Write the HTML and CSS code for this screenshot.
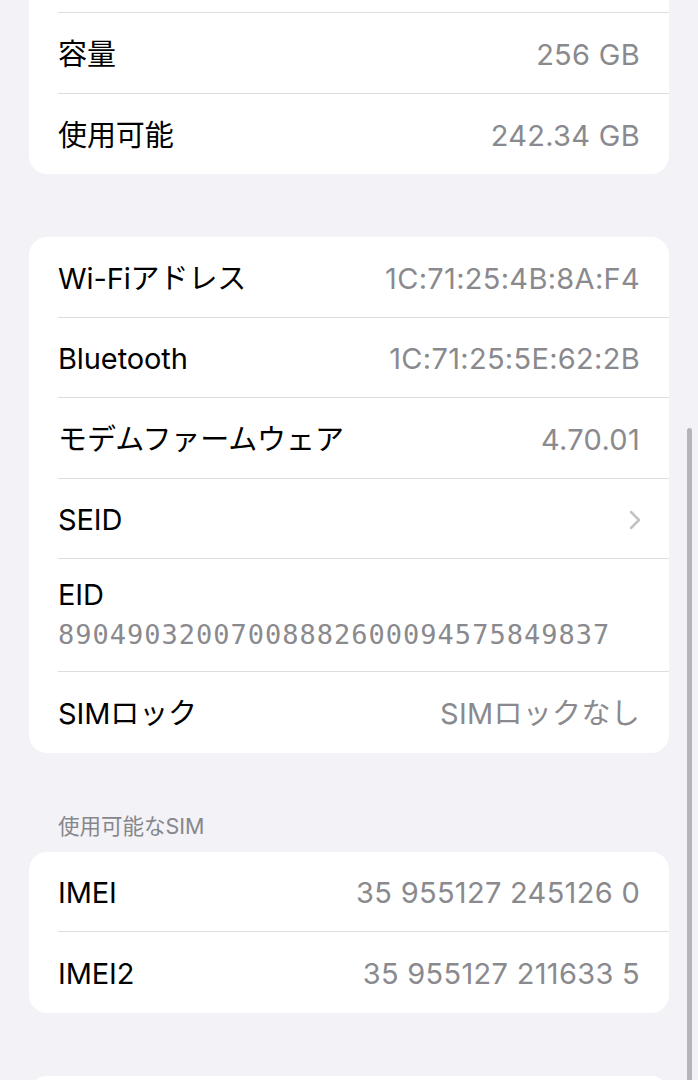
FILE: index.html
```html
<!DOCTYPE html>
<html lang="ja">
<head>
<meta charset="utf-8">
<link rel="stylesheet" href="styles.css">
</head>
<body>
<div class="page">
  <div class="card card-top">
    <div class="row top-stub"><div class="inner"></div></div>
    <div class="row"><div class="inner"><span class="label">容量</span><span class="value">256 GB</span></div></div>
    <div class="row"><div class="inner"><span class="label">使用可能</span><span class="value">242.34 GB</span></div></div>
  </div>

  <div class="card">
    <div class="row"><div class="inner"><span class="label">Wi-Fiアドレス</span><span class="value">1C:71:25:4B:8A:F4</span></div></div>
    <div class="row"><div class="inner"><span class="label">Bluetooth</span><span class="value">1C:71:25:5E:62:2B</span></div></div>
    <div class="row"><div class="inner"><span class="label">モデムファームウェア</span><span class="value">4.70.01</span></div></div>
    <div class="row"><div class="inner"><span class="label">SEID</span>
      <svg class="chevron" width="14" height="22" viewBox="0 0 14 22"><path d="M3 3 L11 11 L3 19" fill="none" stroke="#c4c4c7" stroke-width="2.6" stroke-linecap="round" stroke-linejoin="round"/></svg>
    </div></div>
    <div class="row row-tall"><div class="inner stack"><span class="label">EID</span><span class="value mono">89049032007008882600094575849837</span></div></div>
    <div class="row"><div class="inner"><span class="label">SIMロック</span><span class="value">SIMロックなし</span></div></div>
  </div>

  <div class="section-header">使用可能なSIM</div>

  <div class="card">
    <div class="row"><div class="inner"><span class="label">IMEI</span><span class="value">35 955127 245126 0</span></div></div>
    <div class="row"><div class="inner"><span class="label">IMEI2</span><span class="value">35 955127 211633 5</span></div></div>
  </div>

  <div class="card card-next">
    <div class="row"><div class="inner"></div></div>
  </div>
</div>
<div class="scroll-indicator"></div>
</body>
</html>
```
FILE: styles.css
```css
html, body {
  margin: 0;
  padding: 0;
  background: #f2f2f7;
  overflow: hidden;
}
body {
  font-family: Inter, "Noto Sans CJK JP", sans-serif;
  color: #000;
  -webkit-font-smoothing: antialiased;
}
.page {
  padding: 0 29px;
  height: 1080px;
  overflow: hidden;
}
.card {
  background: #fff;
  border-radius: 18px;
  overflow: hidden;
  margin-bottom: 63px;
}
.card-top {
  border-top-left-radius: 0;
  border-top-right-radius: 0;
}
.row {
  padding-left: 29px;
  height: 80.5px;
  box-sizing: border-box;
}
.inner {
  height: 100%;
  box-sizing: border-box;
  padding-right: 29px;
  padding-top: 4px;
  display: flex;
  align-items: center;
  justify-content: space-between;
  border-bottom: 1px solid #dedee2;
}
.row:last-child .inner {
  border-bottom: none;
}
.top-stub {
  height: 13px;
}
.top-stub .inner {
  padding-top: 0;
}
.label {
  font-size: 29px;
  line-height: 34px;
  letter-spacing: -0.1px;
}
.value {
  font-size: 29px;
  line-height: 34px;
  color: #8a8a8e;
  letter-spacing: 0.3px;
}
.chevron {
  display: block;
  margin-right: -2px;
}
.row-tall {
  height: 113px;
}
.stack {
  flex-direction: column;
  align-items: flex-start;
  justify-content: flex-start;
  padding-top: 19px;
  gap: 6px;
}
.mono {
  font-family: "DejaVu Sans Mono", monospace;
  font-size: 27px;
  letter-spacing: 1px;
}
.section-header {
  padding: 60px 29px 13px;
  margin-top: -63px;
  font-size: 21.5px;
  line-height: 26px;
  color: #86868b;
}
.card-next {
  height: 80px;
}
.scroll-indicator {
  position: fixed;
  left: 687px;
  top: 428px;
  width: 5px;
  height: 700px;
  border-radius: 3px;
  background: #b4b4b9;
}
```
